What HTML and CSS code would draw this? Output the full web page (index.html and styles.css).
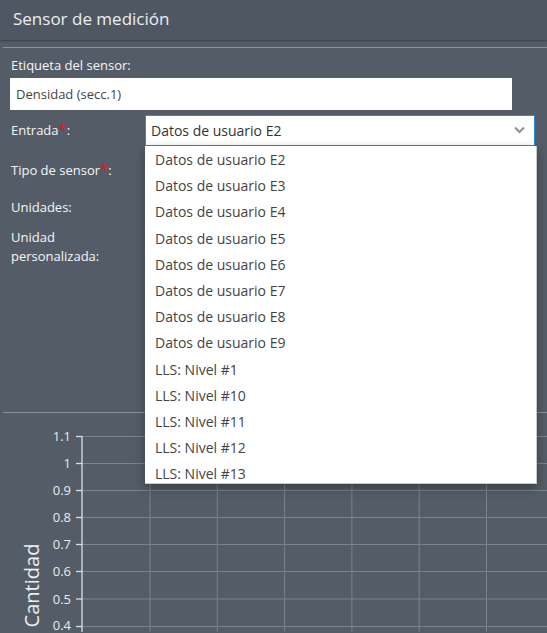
FILE: index.html
```html
<!DOCTYPE html>
<html lang="es">
<head>
<meta charset="utf-8">
<title>Sensor de medición</title>
<link rel="stylesheet" href="styles.css">
</head>
<body>
<div class="panel">
  <header class="panel-header">Sensor de medición</header>
  <div class="divider"></div>
  <form class="form">
    <label class="top-label">Etiqueta del sensor:</label>
    <div class="text-input">Densidad (secc.1)</div>

    <div class="row row-entrada">
      <span class="row-label">Entrada<span class="req">*</span>:</span>
      <div class="select-wrap">
        <div class="select">
          <span class="select-value">Datos de usuario E2</span>
          <svg class="chevron" width="11" height="8" viewBox="0 0 11 8"><path d="M1 1.5 L5.5 6 L10 1.5" fill="none" stroke="#8c8f93" stroke-width="2"/></svg>
        </div>
        <ul class="dropdown">
          <li>Datos de usuario E2</li>
          <li>Datos de usuario E3</li>
          <li>Datos de usuario E4</li>
          <li>Datos de usuario E5</li>
          <li>Datos de usuario E6</li>
          <li>Datos de usuario E7</li>
          <li>Datos de usuario E8</li>
          <li>Datos de usuario E9</li>
          <li>LLS: Nivel #1</li>
          <li>LLS: Nivel #10</li>
          <li>LLS: Nivel #11</li>
          <li>LLS: Nivel #12</li>
          <li>LLS: Nivel #13</li>
        </ul>
      </div>
    </div>

    <div class="row row-tipo">
      <span class="row-label">Tipo de sensor<span class="req">*</span>:</span>
    </div>
    <div class="row row-unidades">
      <span class="row-label">Unidades:</span>
    </div>
    <div class="row row-custom">
      <span class="row-label">Unidad<br>personalizada:</span>
    </div>
  </form>
  <div class="divider divider-lower"></div>

  <svg class="chart" width="547" height="219" viewBox="0 414 547 219">
    <g class="grid">
      <line x1="82" y1="437.5" x2="547" y2="437.5"/>
      <line x1="82" y1="464.5" x2="547" y2="464.5"/>
      <line x1="82" y1="491.5" x2="547" y2="491.5"/>
      <line x1="82" y1="518.5" x2="547" y2="518.5"/>
      <line x1="82" y1="545.5" x2="547" y2="545.5"/>
      <line x1="82" y1="572.5" x2="547" y2="572.5"/>
      <line x1="82" y1="600" x2="547" y2="600"/>
      <line x1="82" y1="627.5" x2="547" y2="627.5"/>
      <line x1="150" y1="437" x2="150" y2="633"/>
      <line x1="217.3" y1="437" x2="217.3" y2="633"/>
      <line x1="284.6" y1="437" x2="284.6" y2="633"/>
      <line x1="351.9" y1="437" x2="351.9" y2="633"/>
      <line x1="419.2" y1="437" x2="419.2" y2="633"/>
      <line x1="486.5" y1="437" x2="486.5" y2="633"/>
    </g>
    <g class="axis">
      <line x1="82" y1="437" x2="82" y2="633"/>
      <line x1="76" y1="437.5" x2="82" y2="437.5"/>
      <line x1="76" y1="464.5" x2="82" y2="464.5"/>
      <line x1="76" y1="491.5" x2="82" y2="491.5"/>
      <line x1="76" y1="518.5" x2="82" y2="518.5"/>
      <line x1="76" y1="545.5" x2="82" y2="545.5"/>
      <line x1="76" y1="572.5" x2="82" y2="572.5"/>
      <line x1="76" y1="600" x2="82" y2="600"/>
      <line x1="76" y1="627.5" x2="82" y2="627.5"/>
    </g>
    <g class="tick-labels">
      <text x="71" y="442">1.1</text>
      <text x="71" y="469">1</text>
      <text x="71" y="496">0.9</text>
      <text x="71" y="523">0.8</text>
      <text x="71" y="550">0.7</text>
      <text x="71" y="577">0.6</text>
      <text x="71" y="604.5">0.5</text>
      <text x="71" y="631">0.4</text>
    </g>
    <text class="axis-title" transform="translate(39 586.5) rotate(-90)">Cantidad</text>
  </svg>
</div>
</body>
</html>
```

FILE: styles.css
```css
* {
  box-sizing: border-box;
}

html, body {
  margin: 0;
  padding: 0;
}

body {
  background: #545d67;
  font-family: "Open Sans", "Liberation Sans", sans-serif;
  color: #f5f6f7;
  width: 547px;
  height: 633px;
  overflow: hidden;
}

.panel {
  width: 547px;
}

.panel-header {
  height: 40px;
  line-height: 38px;
  padding-left: 13px;
  font-size: 17px;
  color: #eceef0;
  background: #4f5862;
  box-shadow: 0 1px 2px rgba(0, 0, 0, 0.35);
  position: relative;
}

.divider {
  height: 1px;
  margin: 7px 0 0 3px;
  background: #8a929b;
}

.form {
  padding-left: 10px;
  display: flex;
  flex-direction: column;
}

.top-label {
  display: block;
  margin-top: 8px;
  padding-left: 1px;
  font-size: 13px;
  line-height: 18px;
  font-weight: 500;
}

.text-input {
  margin-top: 4px;
  width: 502px;
  height: 32px;
  background: #fff;
  color: #444;
  font-size: 13px;
  line-height: 32px;
  padding-left: 6px;
}

.row {
  display: flex;
  align-items: center;
  min-height: 32px;
  margin-top: 5px;
}

.row-entrada {
  min-height: 31px;
}

.row-tipo {
  margin-top: 8px;
}

.row-custom {
  align-items: flex-start;
}

.row-label {
  width: 135px;
  flex: none;
  padding-left: 1px;
  font-size: 13px;
  line-height: 19px;
  font-weight: 500;
}

.req {
  color: #e3121c;
  font-size: 15px;
  line-height: 1;
}

.select-wrap {
  position: relative;
  width: 390px;
}

.select {
  height: 31px;
  border: 1px solid #2b8bd6;
  background: #fff;
  display: flex;
  align-items: center;
  justify-content: space-between;
  padding: 0 9px 0 5px;
}

.select-value {
  font-size: 14px;
  color: #333;
}

.chevron {
  display: block;
  margin-top: -2px;
}

.dropdown {
  position: absolute;
  z-index: 5;
  top: 31px;
  left: 0;
  width: 392px;
  height: 338px;
  margin: 0;
  padding: 1px 0 0;
  list-style: none;
  background: #fff;
  border-right: 1px solid #c8c8c8;
  border-bottom: 1px solid #c8c8c8;
  overflow: hidden;
  box-shadow: 0 4px 10px rgba(0, 0, 0, 0.35);
}

.dropdown::before {
  content: "";
  position: absolute;
  top: -1px;
  left: 0;
  width: 362px;
  height: 1px;
  background: #50565d;
}

.dropdown li {
  height: 26.2px;
  line-height: 26.2px;
  padding-left: 10px;
  font-size: 14px;
  color: #444;
  white-space: nowrap;
}

.divider-lower {
  margin-top: 146px;
}

.chart {
  display: block;
}

.grid line {
  stroke: #7b838d;
  stroke-width: 1;
}

.axis line {
  stroke: #dcdde0;
  stroke-width: 1.3;
}

.tick-labels text {
  font-family: "Open Sans", "Liberation Sans", sans-serif;
  font-size: 13px;
  fill: #e9eaec;
  text-anchor: end;
}

.axis-title {
  font-family: "Open Sans", "Liberation Sans", sans-serif;
  font-size: 20px;
  fill: #eceef0;
  text-anchor: middle;
}
```
